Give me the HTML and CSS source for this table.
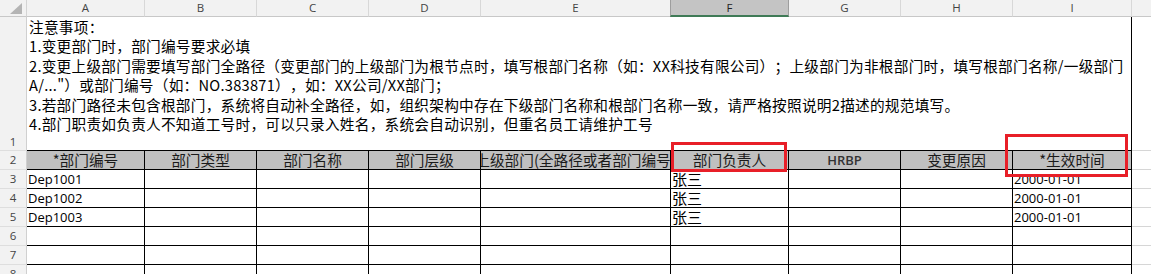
FILE: index.html
```html
<!DOCTYPE html>
<html lang="zh-CN">
<head>
<meta charset="utf-8">
<title>部门变更导入模板</title>
<link rel="stylesheet" href="styles.css">
</head>
<body>
<div class="sheet">
  <div class="corner"><svg class="corner-tri" width="27" height="17" viewBox="0 0 27 17"><polygon points="10,14 22,14 22,3" fill="#b4b4b4"/></svg></div>
  <div class="colhead">A</div>
  <div class="colhead">B</div>
  <div class="colhead">C</div>
  <div class="colhead">D</div>
  <div class="colhead">E</div>
  <div class="colhead sel">F</div>
  <div class="colhead">G</div>
  <div class="colhead">H</div>
  <div class="colhead">I</div>
  <div class="colhead last"></div>

  <div class="rowhead tall">1</div>
  <div class="notes">注意事项：<br>1.变更部门时，部门编号要求必填<br>2.变更上级部门需要填写部门全路径（变更部门的上级部门为根节点时，填写根部门名称（如：XX科技有限公司）；上级部门为非根部门时，填写根部门名称/一级部门<br>A/..."）或部门编号（如：NO.383871），如：XX公司/XX部门；<br>3.若部门路径未包含根部门，系统将自动补全路径，如，组织架构中存在下级部门名称和根部门名称一致，请严格按照说明2描述的规范填写。<br>4.部门职责如负责人不知道工号时，可以只录入姓名，系统会自动识别，但重名员工请维护工号</div>
  <div class="jcell"></div>

  <div class="rowhead">2</div>
  <div class="cell h">*部门编号</div>
  <div class="cell h">部门类型</div>
  <div class="cell h">部门名称</div>
  <div class="cell h">部门层级</div>
  <div class="cell h clip"><span>上级部门(全路径或者部门编号)</span></div>
  <div class="cell h">部门负责人<span class="mark mark-f"></span></div>
  <div class="cell h latin">HRBP</div>
  <div class="cell h">变更原因</div>
  <div class="cell h">*生效时间<span class="mark mark-i"></span></div>
  <div class="jcell"></div>

  <div class="rowhead">3</div>
  <div class="cell d">Dep1001</div><div class="cell"></div><div class="cell"></div><div class="cell"></div><div class="cell"></div>
  <div class="cell zh">张三</div><div class="cell"></div><div class="cell"></div><div class="cell d">2000-01-01</div>
  <div class="jcell"></div>

  <div class="rowhead">4</div>
  <div class="cell d">Dep1002</div><div class="cell"></div><div class="cell"></div><div class="cell"></div><div class="cell"></div>
  <div class="cell zh">张三</div><div class="cell"></div><div class="cell"></div><div class="cell d">2000-01-01</div>
  <div class="jcell"></div>

  <div class="rowhead">5</div>
  <div class="cell d">Dep1003</div><div class="cell"></div><div class="cell"></div><div class="cell"></div><div class="cell"></div>
  <div class="cell zh">张三</div><div class="cell"></div><div class="cell"></div><div class="cell d">2000-01-01</div>
  <div class="jcell"></div>

  <div class="rowhead">6</div>
  <div class="cell"></div><div class="cell"></div><div class="cell"></div><div class="cell"></div><div class="cell"></div>
  <div class="cell"></div><div class="cell"></div><div class="cell"></div><div class="cell"></div>
  <div class="jcell"></div>

  <div class="rowhead">7</div>
  <div class="cell"></div><div class="cell"></div><div class="cell"></div><div class="cell"></div><div class="cell"></div>
  <div class="cell"></div><div class="cell"></div><div class="cell"></div><div class="cell"></div>
  <div class="jcell"></div>

  <div class="rowhead">8</div>
  <div class="cell"></div><div class="cell"></div><div class="cell"></div><div class="cell"></div><div class="cell"></div>
  <div class="cell"></div><div class="cell"></div><div class="cell"></div><div class="cell"></div>
  <div class="jcell"></div>
</div>
</body>
</html>
```
FILE: styles.css
```css
* { box-sizing: border-box; }
html, body { margin: 0; padding: 0; background: #fff; }
body {
  font-family: "Noto Sans CJK SC", "Noto Sans", sans-serif;
  color: #000;
  text-spacing-trim: space-all;
}

.sheet {
  display: grid;
  grid-template-columns: 27px 118px 112px 112px 112px 190px 118px 112px 112px 119px 1fr;
  grid-template-rows: 17px 134px repeat(7, 19px);
  width: 1151px;
  height: 274px;
  overflow: hidden;
}

.corner {
  background: #f2f2f2;
  border-right: 1px solid #d4d4d4;
  border-bottom: 1px solid #c8c8c8;
}
.corner-tri { display: block; }

.colhead {
  background: #f2f2f2;
  border-right: 1px solid #d8d8d8;
  border-bottom: 1px solid #c8c8c8;
  display: flex;
  align-items: center;
  justify-content: center;
  font: 11.5px/1 "Open Sans", "Liberation Sans", sans-serif;
  color: #444;
}
.colhead.sel {
  background: #c4c4c4;
  border-left: 1px solid #9e9e9e;
  border-right: 1px solid #9e9e9e;
  border-bottom: 2px solid #3f7a56;
  color: #222;
  margin-left: -1px;
}
.colhead.last { border-right: none; }

.rowhead {
  background: #f2f2f2;
  border-right: 1px solid #d0d0d0;
  border-bottom: 1px solid #dedede;
  display: flex;
  align-items: center;
  justify-content: center;
  font: 11.5px/1 "Open Sans", "Liberation Sans", sans-serif;
  color: #444;
}
.rowhead.tall { align-items: flex-end; padding-bottom: 3px; }

.notes {
  grid-column: 2 / 11;
  border-right: 1px solid #000;
  border-bottom: 1px solid #000;
  padding-left: 2px;
  font-size: 14.67px;
  line-height: 19.4px;
  letter-spacing: 0.25px;
  white-space: nowrap;
  overflow: hidden;
}

.jcell { border-bottom: 1px solid #d6d6d6; }

.cell {
  position: relative;
  border-right: 1px solid #000;
  border-bottom: 1px solid #000;
  white-space: nowrap;
  font-size: 14.67px;
  line-height: 18px;
}
.cell.h {
  background: #c0c0c0;
  text-align: center;
  color: #1a1a1a;
}
.cell.h.latin {
  font: 600 13px/18px "Open Sans", "Liberation Sans", sans-serif;
  color: #333;
}
.cell.clip {
  display: flex;
  justify-content: center;
  overflow: hidden;
}
.cell.clip span { flex-shrink: 0; }

.cell.d {
  font: 13px/19px "Open Sans", "Liberation Sans", sans-serif;
  padding-left: 1px;
}
.cell.zh {
  font-size: 15px;
  line-height: 17px;
  padding-left: 1px;
}

.mark {
  position: absolute;
  border: 3px solid #e81f28;
  z-index: 5;
  pointer-events: none;
}
.mark-f { left: 0; top: -9px; width: 116px; height: 30px; }
.mark-i { left: -8px; top: -17px; width: 123px; height: 43px; }
```
